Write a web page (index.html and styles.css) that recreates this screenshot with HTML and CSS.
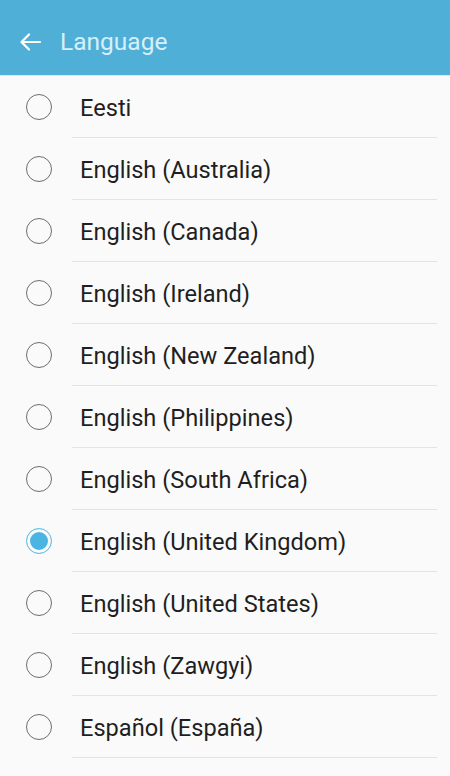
FILE: index.html
```html
<!DOCTYPE html>
<html>
<head>
    <meta charset="utf-8">
    <title>Language</title>
    <link rel="stylesheet" href="styles.css">
</head>
<body>

<div class="app-bar">
    <svg class="back" width="24" height="24" viewBox="0 0 24 24">
        <path d="M22 12H3.5M11 4.5L3.5 12l7.5 7.5" fill="none" stroke="#ffffff" stroke-width="2.2" stroke-linecap="round" stroke-linejoin="round"/>
    </svg>
    <span class="title">Language</span>
</div>

<ul class="lang-list">
    <li class="row"><span class="radio"></span><span class="label">Eesti</span></li>
    <li class="row"><span class="radio"></span><span class="label">English (Australia)</span></li>
    <li class="row"><span class="radio"></span><span class="label">English (Canada)</span></li>
    <li class="row"><span class="radio"></span><span class="label">English (Ireland)</span></li>
    <li class="row"><span class="radio"></span><span class="label">English (New Zealand)</span></li>
    <li class="row"><span class="radio"></span><span class="label">English (Philippines)</span></li>
    <li class="row"><span class="radio"></span><span class="label">English (South Africa)</span></li>
    <li class="row"><span class="radio checked"></span><span class="label">English (United Kingdom)</span></li>
    <li class="row"><span class="radio"></span><span class="label">English (United States)</span></li>
    <li class="row"><span class="radio"></span><span class="label">English (Zawgyi)</span></li>
    <li class="row"><span class="radio"></span><span class="label">Español (España)</span></li>
    <li class="row"><span class="radio"></span></li>
</ul>

</body>
</html>
```

FILE: styles.css
```css
* {
    box-sizing: border-box;
}
html, body {
    margin: 0;
    padding: 0;
    height: 776px;
    overflow: hidden;
}
body {
    background: #fafafa;
    font-family: Roboto, "Noto Sans", sans-serif;
    color: #1f1f1f;
}
.app-bar {
    height: 76px;
    background: #50afd6;
    display: flex;
    align-items: center;
    padding: 8px 0 0 18px;
    border-bottom: 1px solid #e6e6e6;
}
.back {
    display: block;
}
.title {
    margin-left: 18px;
    font-size: 24.5px;
    color: #d6f0fb;
}
.lang-list {
    list-style: none;
    margin: 0;
    padding: 0;
}
.row {
    height: 62px;
    display: flex;
    align-items: center;
    padding-left: 26px;
    position: relative;
}
.row::after {
    content: "";
    position: absolute;
    left: 72px;
    right: 13px;
    bottom: 0;
    height: 1px;
    background: #e3e3e3;
}
.radio {
    width: 26px;
    height: 26px;
    border: 1.5px solid #6d6d6d;
    border-radius: 50%;
    flex-shrink: 0;
    margin-top: -1px;
}
.radio.checked {
    border-color: #6dc4e6;
    background: #4ab5e2;
    box-shadow: inset 0 0 0 3px #fafafa;
}
.label {
    margin-left: 28px;
    font-size: 23.6px;
    margin-top: 1px;
}
```
